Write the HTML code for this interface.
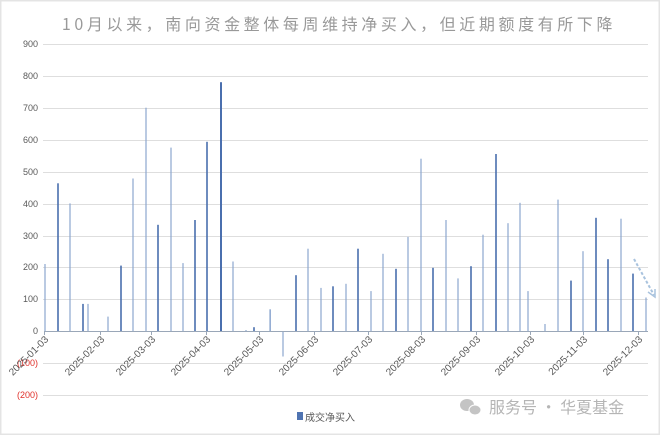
<!DOCTYPE html>
<html><head><meta charset="utf-8"><style>
html,body{margin:0;padding:0;background:#fff}
body{width:660px;height:435px;overflow:hidden;font-family:"Liberation Sans","Noto Sans CJK SC",sans-serif}
</style></head><body>
<svg width="660" height="435" xmlns="http://www.w3.org/2000/svg" font-family="Liberation Sans, Noto Sans CJK SC, sans-serif">
<rect x="0.5" y="0.5" width="659" height="434" fill="#fff" stroke="#e4e4e4" stroke-width="2"/>
<text x="339" y="30" text-anchor="middle" font-size="16" fill="#999" letter-spacing="3.6" font-family="Noto Sans CJK SC, sans-serif">10月以来，南向资金整体每周维持净买入，但近期额度有所下降</text>
<g stroke="#dedede" stroke-width="1">
<line x1="43" y1="44.5" x2="648" y2="44.5"/><line x1="43" y1="76.5" x2="648" y2="76.5"/>
<line x1="43" y1="108.5" x2="648" y2="108.5"/><line x1="43" y1="140.5" x2="648" y2="140.5"/>
<line x1="43" y1="172.5" x2="648" y2="172.5"/><line x1="43" y1="204.5" x2="648" y2="204.5"/>
<line x1="43" y1="236.5" x2="648" y2="236.5"/><line x1="43" y1="267.5" x2="648" y2="267.5"/>
<line x1="43" y1="299.5" x2="648" y2="299.5"/><line x1="43" y1="363.5" x2="648" y2="363.5"/>
<line x1="43" y1="395.5" x2="648" y2="395.5"/>
</g>
<g font-size="9" fill="#595959" text-anchor="end">
<text x="38" y="47">900</text><text x="38" y="79">800</text><text x="38" y="111">700</text>
<text x="38" y="143">600</text><text x="38" y="175">500</text><text x="38" y="207">400</text>
<text x="38" y="239">300</text><text x="38" y="270">200</text><text x="38" y="302">100</text>
<text x="38" y="334">0</text>
</g>
<g font-size="9" fill="#e0302a" text-anchor="end"><text x="38" y="366">(100)</text><text x="38" y="398">(200)</text></g>
<g fill="#8ba6cf">
<rect x="44.4" y="264" width="1.2" height="67"/>
<rect x="69.4" y="203.4" width="1.2" height="127.6"/>
<rect x="87.4" y="303.9" width="1.2" height="27.1"/>
<rect x="107.4" y="316.6" width="1.2" height="14.4"/>
<rect x="132.4" y="178.5" width="1.2" height="152.5"/>
<rect x="145.4" y="107.7" width="1.2" height="223.3"/>
<rect x="170.4" y="147.6" width="1.2" height="183.4"/>
<rect x="182.4" y="263.1" width="1.2" height="67.9"/>
<rect x="232.4" y="261.5" width="1.2" height="69.5"/>
<rect x="245.4" y="330" width="1.2" height="1"/>
<rect x="269.4" y="309.3" width="1.5" height="21.7"/>
<rect x="282.4" y="331" width="1.2" height="25.5"/>
<rect x="307.4" y="248.7" width="1.2" height="82.3"/>
<rect x="320.4" y="287.9" width="1.2" height="43.1"/>
<rect x="345.4" y="283.8" width="1.2" height="47.2"/>
<rect x="370.4" y="291.1" width="1.2" height="39.9"/>
<rect x="382.4" y="253.8" width="1.2" height="77.2"/>
<rect x="407.4" y="236.9" width="1.2" height="94.1"/>
<rect x="420.4" y="158.7" width="1.2" height="172.3"/>
<rect x="445.4" y="220" width="1.2" height="111"/>
<rect x="457.4" y="278.4" width="1.2" height="52.6"/>
<rect x="482.4" y="234.7" width="1.2" height="96.3"/>
<rect x="507.4" y="223.2" width="1.2" height="107.8"/>
<rect x="519.4" y="202.8" width="1.2" height="128.2"/>
<rect x="527.4" y="291.1" width="1.2" height="39.9"/>
<rect x="544.4" y="324" width="1.2" height="7"/>
<rect x="557.4" y="199.6" width="1.2" height="131.4"/>
<rect x="582.4" y="251.2" width="1.2" height="79.8"/>
<rect x="620.4" y="218.7" width="1.2" height="112.3"/>
<rect x="645.4" y="297.5" width="1.2" height="33.5"/>
</g>
<g fill="#4a6fae">
<rect x="57.2" y="183.3" width="1.6" height="147.7"/>
<rect x="82.2" y="303.9" width="1.6" height="27.1"/>
<rect x="120.2" y="265.6" width="1.6" height="65.4"/>
<rect x="157.2" y="224.8" width="1.6" height="106.2"/>
<rect x="194.2" y="220" width="1.6" height="111"/>
<rect x="206.2" y="141.8" width="1.6" height="189.2"/>
<rect x="220" y="82.2" width="2" height="248.8"/>
<rect x="253.2" y="327.2" width="1.6" height="3.8"/>
<rect x="295.2" y="275.2" width="1.6" height="55.8"/>
<rect x="332.2" y="286.3" width="1.6" height="44.7"/>
<rect x="357.2" y="248.7" width="1.6" height="82.3"/>
<rect x="395.2" y="268.8" width="1.6" height="62.2"/>
<rect x="432.2" y="267.8" width="1.6" height="63.2"/>
<rect x="470.2" y="266.2" width="1.6" height="64.8"/>
<rect x="495.2" y="154" width="1.6" height="177"/>
<rect x="570.2" y="280.6" width="1.6" height="50.4"/>
<rect x="595.2" y="217.8" width="1.6" height="113.2"/>
<rect x="607.2" y="259.2" width="1.6" height="71.8"/>
<rect x="632.2" y="273.6" width="1.6" height="57.4"/>
</g>
<line x1="44" y1="331.5" x2="648" y2="331.5" stroke="#9aa7b8" stroke-width="1"/>
<g stroke="#9aa7b8"><line x1="44.5" y1="331" x2="44.5" y2="335"/><line x1="100.5" y1="331" x2="100.5" y2="335"/><line x1="151.5" y1="331" x2="151.5" y2="335"/><line x1="206.5" y1="331" x2="206.5" y2="335"/><line x1="259.5" y1="331" x2="259.5" y2="335"/><line x1="314.5" y1="331" x2="314.5" y2="335"/><line x1="368.5" y1="331" x2="368.5" y2="335"/><line x1="421.5" y1="331" x2="421.5" y2="335"/><line x1="476.5" y1="331" x2="476.5" y2="335"/><line x1="530.5" y1="331" x2="530.5" y2="335"/><line x1="583.5" y1="331" x2="583.5" y2="335"/><line x1="638.5" y1="331" x2="638.5" y2="335"/></g>
<g font-size="10" fill="#595959" text-anchor="end">
<text transform="translate(49,340) rotate(-45)">2025-01-03</text>
<text transform="translate(105,340) rotate(-45)">2025-02-03</text>
<text transform="translate(156,340) rotate(-45)">2025-03-03</text>
<text transform="translate(211,340) rotate(-45)">2025-04-03</text>
<text transform="translate(264,340) rotate(-45)">2025-05-03</text>
<text transform="translate(319,340) rotate(-45)">2025-06-03</text>
<text transform="translate(373,340) rotate(-45)">2025-07-03</text>
<text transform="translate(426,340) rotate(-45)">2025-08-03</text>
<text transform="translate(481,340) rotate(-45)">2025-09-03</text>
<text transform="translate(535,340) rotate(-45)">2025-10-03</text>
<text transform="translate(588,340) rotate(-45)">2025-11-03</text>
<text transform="translate(643,340) rotate(-45)">2025-12-03</text>
</g>
<line x1="634" y1="259" x2="654" y2="295" stroke="#a9c3de" stroke-width="2" stroke-dasharray="3,2"/>
<path d="M648 292 L655 297 L655 289" fill="none" stroke="#a9c3de" stroke-width="1.5"/>
<rect x="297" y="412" width="6" height="8" fill="#4f74b2"/>
<text x="305" y="421" font-size="10" fill="#595959" font-family="Noto Sans CJK SC, sans-serif">成交净买入</text>
<g fill="#c4c4c4"><ellipse cx="467" cy="405" rx="7" ry="6"/><ellipse cx="475" cy="410" rx="6" ry="5" stroke="#fff" stroke-width="1"/></g>
<text x="489" y="413" font-size="16" fill="#b5b5b5" font-family="Noto Sans CJK SC, sans-serif">服务号 · 华夏基金</text>
</svg>
</body></html>
